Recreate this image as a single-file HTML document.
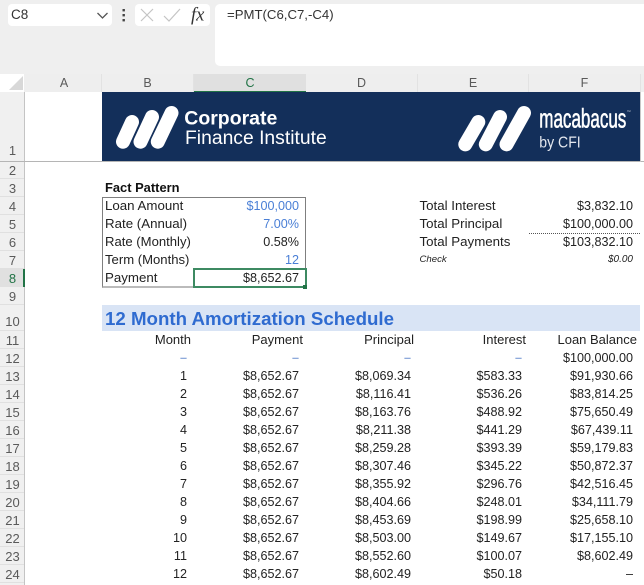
<!DOCTYPE html>
<html><head><meta charset="utf-8"><style>
html,body{margin:0;padding:0;background:#fff}
body{width:644px;height:585px;position:relative;overflow:hidden;font-family:"Liberation Sans",sans-serif;color:#222}
div{position:absolute;box-sizing:border-box}
.h{top:74px;height:18px;line-height:18px;background:#eee;text-align:center;font-size:12.5px;color:#5a5a5a;border-right:1px solid #e2e2e2}
.n{left:0;width:24px;height:18px;line-height:19px;background:#f0f0f0;text-align:center;font-size:13px;color:#5a5a5a;border-bottom:1px solid #e0e0e0;padding-left:1px}
.r{left:0;width:644px;height:18px;line-height:18px;font-size:12.6px;white-space:nowrap}
.r span{position:absolute;top:0}
.l{font-size:13.3px}
.B{right:457px}.C{right:345px}.D{right:233px}.E{right:122px}.F{right:11px}
.H{font-size:13px}
.u{color:#4a7fd6}
.x{color:#8eaadb;font-weight:bold}
</style></head><body>
<div style="left:0;top:0;width:644px;height:74px;background:#efefef"></div>
<div style="left:8px;top:4px;width:104px;height:22px;background:#fff;border-radius:4px;font-size:13.5px;line-height:22px;padding-left:3px;color:#333">C8</div>
<svg style="position:absolute;left:0;top:0" width="215" height="30"><path d="M97.5 13l5 5 5-5" fill="none" stroke="#555" stroke-width="1.3"/><rect x="122.5" y="9" width="2.4" height="2.4" fill="#444"/><rect x="122.5" y="14" width="2.4" height="2.4" fill="#444"/><rect x="122.5" y="19" width="2.4" height="2.4" fill="#444"/></svg>
<div style="left:135px;top:4px;width:75px;height:22px;background:#fff;border-radius:4px"></div>
<svg style="position:absolute;left:135px;top:4px" width="75" height="22"><path d="M6 5l12 12M18 5L6 17" stroke="#c4c4c4" stroke-width="1.2" fill="none"/><path d="M29 12l5 5 11-12" stroke="#c4c4c4" stroke-width="1.2" fill="none"/><text x="56" y="16.5" font-family="Liberation Serif" font-style="italic" font-size="18.5" fill="#333">fx</text></svg>
<div style="left:215px;top:4px;width:440px;height:62px;background:#fff;border-radius:5px;font-size:13.2px;line-height:22px;padding-left:12px;color:#333">=PMT(C6,C7,-C4)</div>
<svg style="position:absolute;left:0;top:74px" width="25" height="18"><path d="M9 16L23 2V16Z" fill="#d8d8d8"/></svg>
<div class="h" style="left:24px;width:78px;padding-left:3px">A</div>
<div class="h" style="left:102px;width:92px">B</div>
<div class="h" style="left:194px;width:112px;background:#e0e0e0;color:#217346;border-bottom:1px solid #217346;border-right:0">C</div>
<div class="h" style="left:306px;width:112px">D</div>
<div class="h" style="left:418px;width:111px">E</div>
<div class="h" style="left:529px;width:112px">F</div>
<div class="h" style="left:641px;width:3px;border:0"></div>

<div style="left:0;top:92px;width:24px;height:493px;background:#f0f0f0"></div>
<div class="n" style="top:92px;height:69px;line-height:118px;border-bottom:0">1</div>
<div class="n" style="top:161px">2</div><div class="n" style="top:179px">3</div><div class="n" style="top:197px">4</div><div class="n" style="top:215px">5</div><div class="n" style="top:233px">6</div><div class="n" style="top:251px">7</div>
<div class="n" style="top:269px;background:#e0e0e0;color:#217346">8</div>
<div class="n" style="top:287px">9</div>
<div class="n" style="top:305px;height:26px;line-height:34px">10</div>
<div class="n" style="top:331px">11</div><div class="n" style="top:349px">12</div><div class="n" style="top:367px">13</div><div class="n" style="top:385px">14</div><div class="n" style="top:403px">15</div><div class="n" style="top:421px">16</div><div class="n" style="top:439px">17</div><div class="n" style="top:457px">18</div><div class="n" style="top:475px">19</div><div class="n" style="top:493px">20</div><div class="n" style="top:511px">21</div><div class="n" style="top:529px">22</div><div class="n" style="top:547px">23</div><div class="n" style="top:565px">24</div>
<div style="left:24px;top:92px;width:1px;height:493px;background:#c4c4c4"></div>
<div style="left:23px;top:269px;width:2px;height:18px;background:#217346"></div>
<div style="left:0;top:161px;width:644px;height:1px;background:#b5b5b5"></div>

<div style="left:102px;top:92px;width:538px;height:69px;background:#132f5a"></div>
<div style="left:640px;top:92px;width:1px;height:70px;background:#c8c8c8"></div>
<svg style="position:absolute;left:0;top:0" width="644" height="170">
<g stroke="#fff" stroke-width="14" stroke-linecap="round" fill="none">
<path d="M123 141.7L132 122M140.5 141.7L152 117M157.8 141.7L171.5 113"/>
<path d="M465.3 144.3L478.3 122M485.8 144.3L500 117M506.5 144.3L524 113"/>
</g>
<text x="184.3" y="124.5" font-size="19.5" font-weight="bold" fill="#fff" textLength="93" lengthAdjust="spacingAndGlyphs">Corporate</text>
<text x="185" y="144" font-size="19" fill="#fff" textLength="141.7" lengthAdjust="spacingAndGlyphs">Finance Institute</text>
<text x="539.3" y="127.5" font-size="26.5" fill="#fff" stroke="#fff" stroke-width=".6" textLength="87" lengthAdjust="spacingAndGlyphs">macabacus</text>
<text x="626.8" y="113" font-size="4" fill="#d0d6e0">™</text>
<text x="539.3" y="147.3" font-size="15.5" fill="#e4e8ef" textLength="41.4" lengthAdjust="spacingAndGlyphs">by CFI</text>
</svg>

<div class="r" style="top:179px"><span style="left:105px;font-weight:bold;color:#111;font-size:12.9px">Fact Pattern</span></div>
<div style="left:102px;top:197px;width:204px;height:91px;border:1px solid #7f7f7f;border-bottom:2px solid #bbb"></div>
<div class="r" style="top:197px"><span class="l" style="left:105px">Loan Amount</span><span class="C u">$100,000</span><span class="l" style="left:419.5px">Total Interest</span><span class="F">$3,832.10</span></div>
<div class="r" style="top:215px"><span class="l" style="left:105px">Rate (Annual)</span><span class="C u">7.00%</span><span class="l" style="left:419.5px">Total Principal</span><span class="F">$100,000.00</span></div>
<div style="left:529px;top:233px;width:111px;height:1px;border-top:1px dotted #555"></div>
<div class="r" style="top:233px"><span class="l" style="left:105px;font-size:13.1px">Rate (Monthly)</span><span class="C">0.58%</span><span class="l" style="left:419.5px">Total Payments</span><span class="F">$103,832.10</span></div>
<div class="r" style="top:251px"><span class="l" style="left:105px;font-size:13.1px">Term (Months)</span><span class="C u">12</span><span style="left:419.5px;font-size:9.6px;font-style:italic">Check</span><span class="F" style="font-size:10px;font-style:italic">$0.00</span></div>
<div class="r" style="top:269px"><span class="l" style="left:105px">Payment</span><span class="C">$8,652.67</span></div>
<div style="left:193px;top:268px;width:114px;height:20px;border:2px solid #3d8a62"></div>
<div style="left:303px;top:285px;width:4px;height:4px;background:#217346"></div>

<div style="left:102px;top:305px;width:538px;height:26px;background:#d9e4f5"></div>
<div class="r" style="top:305px;height:26px;line-height:27px"><span style="left:105px;font-size:18.7px;font-weight:bold;color:#2f6bd0;white-space:nowrap">12 Month Amortization Schedule</span></div>

<div class="r H" style="top:331px"><span class="B" style="right:453px">Month</span><span class="C" style="right:341px">Payment</span><span class="D" style="right:230px">Principal</span><span class="E" style="right:118px">Interest</span><span class="F" style="right:7px">Loan Balance</span></div>
<div class="r" style="top:349px"><span class="B x">–</span><span class="C x">–</span><span class="D x">–</span><span class="E x">–</span><span class="F">$100,000.00</span></div>
<div class="r" style="top:367px"><span class="B">1</span><span class="C">$8,652.67</span><span class="D">$8,069.34</span><span class="E">$583.33</span><span class="F">$91,930.66</span></div>
<div class="r" style="top:385px"><span class="B">2</span><span class="C">$8,652.67</span><span class="D">$8,116.41</span><span class="E">$536.26</span><span class="F">$83,814.25</span></div>
<div class="r" style="top:403px"><span class="B">3</span><span class="C">$8,652.67</span><span class="D">$8,163.76</span><span class="E">$488.92</span><span class="F">$75,650.49</span></div>
<div class="r" style="top:421px"><span class="B">4</span><span class="C">$8,652.67</span><span class="D">$8,211.38</span><span class="E">$441.29</span><span class="F">$67,439.11</span></div>
<div class="r" style="top:439px"><span class="B">5</span><span class="C">$8,652.67</span><span class="D">$8,259.28</span><span class="E">$393.39</span><span class="F">$59,179.83</span></div>
<div class="r" style="top:457px"><span class="B">6</span><span class="C">$8,652.67</span><span class="D">$8,307.46</span><span class="E">$345.22</span><span class="F">$50,872.37</span></div>
<div class="r" style="top:475px"><span class="B">7</span><span class="C">$8,652.67</span><span class="D">$8,355.92</span><span class="E">$296.76</span><span class="F">$42,516.45</span></div>
<div class="r" style="top:493px"><span class="B">8</span><span class="C">$8,652.67</span><span class="D">$8,404.66</span><span class="E">$248.01</span><span class="F">$34,111.79</span></div>
<div class="r" style="top:511px"><span class="B">9</span><span class="C">$8,652.67</span><span class="D">$8,453.69</span><span class="E">$198.99</span><span class="F">$25,658.10</span></div>
<div class="r" style="top:529px"><span class="B">10</span><span class="C">$8,652.67</span><span class="D">$8,503.00</span><span class="E">$149.67</span><span class="F">$17,155.10</span></div>
<div class="r" style="top:547px"><span class="B">11</span><span class="C">$8,652.67</span><span class="D">$8,552.60</span><span class="E">$100.07</span><span class="F">$8,602.49</span></div>
<div class="r" style="top:565px"><span class="B">12</span><span class="C">$8,652.67</span><span class="D">$8,602.49</span><span class="E">$50.18</span><span class="F">–</span></div>
</body></html>
